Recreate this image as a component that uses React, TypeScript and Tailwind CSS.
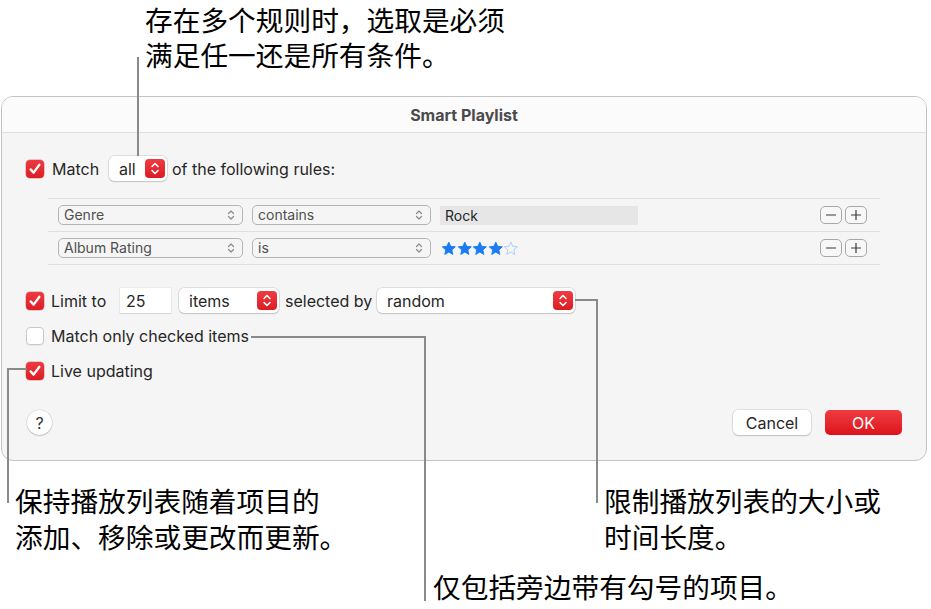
import React from "react"

const cjk = "font-['Noto_Sans_CJK_SC','Noto_Sans',sans-serif]"

function Checkbox({ checked }: { checked: boolean }) {
  if (!checked) {
    return (
      <div className="w-[18px] h-[18px] rounded-[4px] bg-white border border-[#c9c9c9] shadow-[0_1px_1px_rgba(0,0,0,0.06)] shrink-0" />
    )
  }
  return (
    <div className="w-[18px] h-[18px] rounded-[4px] bg-gradient-to-b from-[#ec3a40] to-[#dc1c24] flex items-center justify-center shrink-0 shadow-[0_0_0_0.5px_rgba(160,0,0,0.4)]">
      <svg width="18" height="18" viewBox="0 0 18 18">
        <path d="M4.6 9.4 L7.6 12.6 L13.4 4.8" fill="none" stroke="white" strokeWidth="2.3" strokeLinecap="round" strokeLinejoin="round" />
      </svg>
    </div>
  )
}

function RedStepper() {
  return (
    <div className="w-[20px] h-[19px] rounded-[4px] bg-gradient-to-b from-[#ef3b42] to-[#dc1a22] flex items-center justify-center shrink-0">
      <svg width="20" height="19" viewBox="0 0 20 19">
        <path d="M7 7.5 L10 4.5 L13 7.5" fill="none" stroke="white" strokeWidth="1.6" strokeLinecap="round" strokeLinejoin="round" />
        <path d="M7 11.5 L10 14.5 L13 11.5" fill="none" stroke="white" strokeWidth="1.6" strokeLinecap="round" strokeLinejoin="round" />
      </svg>
    </div>
  )
}

function PopUp({ label, width }: { label: string; width: string }) {
  return (
    <div className={`${width} h-[25px] rounded-[5px] bg-white shadow-[0_0_0_0.5px_rgba(0,0,0,0.18),0_1px_1.5px_rgba(0,0,0,0.12)] flex items-center pl-[10px] pr-[2px] shrink-0`}>
      <span className="flex-1 text-[16px] text-[#262626]">{label}</span>
      <RedStepper />
    </div>
  )
}

function RulePopUp({ label, width }: { label: string; width: string }) {
  return (
    <div className={`${width} h-[20px] rounded-[5px] border border-[#b4b4b4] flex items-center pl-[5px] pr-[7px] shrink-0`}>
      <span className="flex-1 text-[14px] text-[#4f4f4f] leading-none">{label}</span>
      <svg width="8" height="12" viewBox="0 0 8 12">
        <path d="M1.5 4.5 L4 2 L6.5 4.5" fill="none" stroke="#8a8a8a" strokeWidth="1.2" strokeLinecap="round" strokeLinejoin="round" />
        <path d="M1.5 7.5 L4 10 L6.5 7.5" fill="none" stroke="#8a8a8a" strokeWidth="1.2" strokeLinecap="round" strokeLinejoin="round" />
      </svg>
    </div>
  )
}

function SmallButton({ plus }: { plus?: boolean }) {
  return (
    <div className="w-[22px] h-[18px] rounded-[5px] border border-[#a8a8a8] bg-[#f7f7f7] flex items-center justify-center">
      <svg width="12" height="12" viewBox="0 0 12 12">
        <path d="M1 6 H11" stroke="#3a3a3a" strokeWidth="1.2" />
        {plus && <path d="M6 1 V11" stroke="#3a3a3a" strokeWidth="1.2" />}
      </svg>
    </div>
  )
}

function Star({ filled }: { filled: boolean }) {
  return (
    <svg width="15.6" height="15" viewBox="0 0 16 16">
      <path
        d="M8 1.2l2.05 4.5 4.9.5-3.7 3.3 1.05 4.8L8 11.8l-4.3 2.5 1.05-4.8L1.05 6.2l4.9-.5z"
        fill={filled ? "#1b7cf3" : "none"}
        stroke={filled ? "#1b7cf3" : "#a9cbf7"}
        strokeWidth="1"
        strokeLinejoin="round"
      />
    </svg>
  )
}

function RuleRow({ field, op, children }: { field: string; op: string; children: React.ReactNode }) {
  return (
    <div className="h-[33px] border-b border-[#dfdfdf] flex items-center pl-[10px] pr-[13px]">
      <RulePopUp label={field} width="w-[185px]" />
      <div className="ml-[9px]">
        <RulePopUp label={op} width="w-[179px]" />
      </div>
      <div className="ml-[9px] w-[198px] h-[19px] flex items-center">{children}</div>
      <div className="ml-auto flex gap-[3px]">
        <SmallButton />
        <SmallButton plus />
      </div>
    </div>
  )
}

export default function App() {
  return (
    <div className="relative w-[931px] h-[609px] overflow-hidden bg-white text-black">
      {/* top note */}
      <div className={`${cjk} pl-[145px] pt-[2px] text-[27.7px] leading-[35px]`}>
        <div>存在多个规则时，选取是必须</div>
        <div>满足任一还是所有条件。</div>
      </div>

      {/* dialog */}
      <div className="mt-[24px] ml-[1px] w-[926px] h-[365px] rounded-[12px] border border-[#c4c4c4] bg-[#f5f5f5] overflow-hidden flex flex-col font-[Inter,sans-serif]">
        <div className="h-[36px] border-b border-[#dedede] bg-[#fbfbfb] flex items-center justify-center text-[16px] font-bold text-[#4b4b4b] shrink-0">
          Smart Playlist
        </div>

        <div className="flex-1 px-[24px] pt-[23px] flex flex-col">
          <div className="h-[25px] flex items-center text-[16px] text-[#262626]">
            <Checkbox checked />
            <span className="ml-[8px] w-[57px]">Match</span>
            <PopUp label="all" width="w-[58px]" />
            <span className="ml-[5px]">of the following rules:</span>
          </div>

          <div className="mt-[17px] ml-[22px] w-[832px] border-t border-[#dfdfdf]">
            <RuleRow field="Genre" op="contains">
              <div className="w-full h-full bg-[#e6e6e6] flex items-center pl-[5px] text-[14px] text-[#262626]">Rock</div>
            </RuleRow>
            <RuleRow field="Album Rating" op="is">
              <div className="flex items-center pl-[1px]">
                <Star filled />
                <Star filled />
                <Star filled />
                <Star filled />
                <Star filled={false} />
              </div>
            </RuleRow>
          </div>

          <div className="mt-[23px] h-[25px] flex items-center text-[16px] text-[#262626]">
            <Checkbox checked />
            <span className="ml-[7px] w-[69px]">Limit to</span>
            <div className="w-[51px] h-[25px] bg-white shadow-[0_0_0_0.5px_rgba(0,0,0,0.08),0_1px_1px_rgba(0,0,0,0.08)] flex items-center pl-[6px]">25</div>
            <div className="ml-[8px]">
              <PopUp label="items" width="w-[100px]" />
            </div>
            <span className="ml-[6px] w-[92px]">selected by</span>
            <PopUp label="random" width="w-[198px]" />
          </div>

          <div className="mt-[10px] h-[25px] flex items-center text-[16px] text-[#262626]">
            <Checkbox checked={false} />
            <span className="ml-[7px]">Match only checked items</span>
          </div>

          <div className="mt-[10px] h-[25px] flex items-center text-[16px] text-[#262626]">
            <Checkbox checked />
            <span className="ml-[7px]">Live updating</span>
          </div>

          <div className="mt-[27px] h-[25px] flex items-center text-[16px]">
            <div className="ml-[1px] w-[25px] h-[25px] rounded-full bg-white shadow-[0_0_0_0.5px_rgba(0,0,0,0.15),0_1px_1.5px_rgba(0,0,0,0.15)] flex items-center justify-center text-[#333]">
              ?
            </div>
            <div className="ml-auto w-[78px] h-[25px] rounded-[5px] bg-white shadow-[0_0_0_0.5px_rgba(0,0,0,0.15),0_1px_1.5px_rgba(0,0,0,0.15)] flex items-center justify-center text-[#262626]">
              Cancel
            </div>
            <div className="ml-[14px] w-[77px] h-[25px] rounded-[5px] bg-gradient-to-b from-[#ef3a41] to-[#dd1019] flex items-center justify-center text-white">
              OK
            </div>
          </div>
        </div>
      </div>

      {/* bottom notes */}
      <div className={`${cjk} mt-[21px] flex text-[27.7px] leading-[36px]`}>
        <div className="pl-[15px] w-[604px]">
          <div>保持播放列表随着项目的</div>
          <div>添加、移除或更改而更新。</div>
        </div>
        <div>
          <div>限制播放列表的大小或</div>
          <div>时间长度。</div>
        </div>
      </div>
      <div className={`${cjk} mt-[14px] pl-[433px] text-[27.7px] leading-[36px]`}>仅包括旁边带有勾号的项目。</div>

      {/* leader lines */}
      <div className="absolute left-[137px] top-[57px] w-[2px] h-[99px] bg-[#8a8a8a]" />
      <div className="absolute left-[575px] top-[299px] w-[23px] h-[2px] bg-[#8a8a8a]" />
      <div className="absolute left-[596px] top-[299px] w-[2px] h-[204px] bg-[#8a8a8a]" />
      <div className="absolute left-[251px] top-[336px] w-[175px] h-[2px] bg-[#8a8a8a]" />
      <div className="absolute left-[424px] top-[336px] w-[2px] h-[265px] bg-[#8a8a8a]" />
      <div className="absolute left-[7px] top-[368px] w-[20px] h-[2px] bg-[#8a8a8a]" />
      <div className="absolute left-[7px] top-[368px] w-[2px] h-[135px] bg-[#8a8a8a]" />
    </div>
  )
}
